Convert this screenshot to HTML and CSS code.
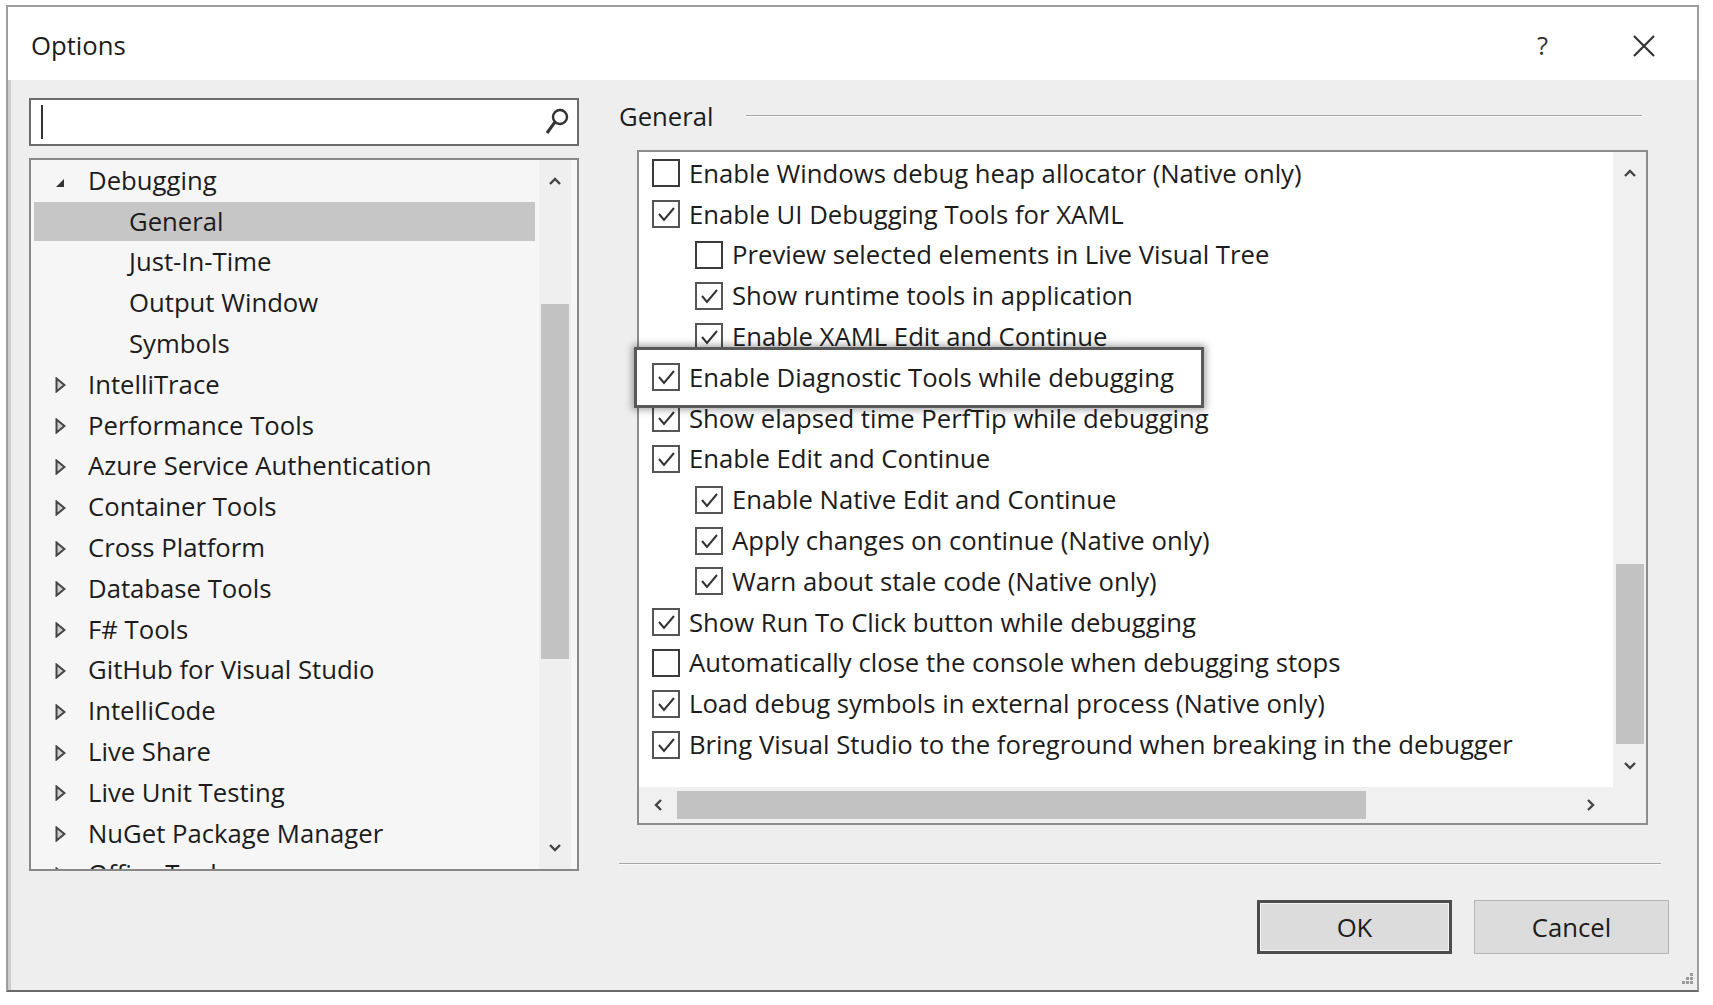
FILE: index.html
```html
<!DOCTYPE html>
<html>
<head>
<meta charset="utf-8">
<title>Options</title>
<link rel="stylesheet" href="styles.css">
</head>
<body>
<div class="window">
  <div class="titlebar">
    <span class="title">Options</span>
    <span class="help">?</span>
    <svg class="close" width="24" height="24" viewBox="0 0 24 24"><path d="M2 2 L22 22 M22 2 L2 22" stroke="#333" stroke-width="2.2" fill="none"/></svg>
  </div>
  <div class="content">
    <div class="left">
      <div class="search">
        <span class="caret"></span>
        <svg class="search-icon" width="26" height="32" viewBox="0 0 26 32"><circle cx="16" cy="11" r="7" stroke="#333" stroke-width="2.4" fill="none"/><path d="M11 16 L3 27" stroke="#333" stroke-width="3" fill="none"/></svg>
      </div>
      <div class="tree">
        <div class="tree-list">
          <div class="trow"><span class="exp"><svg width="10" height="10" viewBox="0 0 10 10"><polygon points="9,1 9,9 1,9" fill="#333"/></svg></span>Debugging</div>
          <div class="trow sub sel">General</div>
          <div class="trow sub">Just-In-Time</div>
          <div class="trow sub">Output Window</div>
          <div class="trow sub">Symbols</div>
          <div class="trow"><span class="exp"><svg class="tri" width="11" height="16" viewBox="0 0 11 16"><polygon points="1.5,1.5 9.5,8 1.5,14.5" stroke="#444" stroke-width="2" fill="#cfcfcf"/></svg></span>IntelliTrace</div>
          <div class="trow"><span class="exp"><svg class="tri" width="11" height="16" viewBox="0 0 11 16"><polygon points="1.5,1.5 9.5,8 1.5,14.5" stroke="#444" stroke-width="2" fill="#cfcfcf"/></svg></span>Performance Tools</div>
          <div class="trow"><span class="exp"><svg class="tri" width="11" height="16" viewBox="0 0 11 16"><polygon points="1.5,1.5 9.5,8 1.5,14.5" stroke="#444" stroke-width="2" fill="#cfcfcf"/></svg></span>Azure Service Authentication</div>
          <div class="trow"><span class="exp"><svg class="tri" width="11" height="16" viewBox="0 0 11 16"><polygon points="1.5,1.5 9.5,8 1.5,14.5" stroke="#444" stroke-width="2" fill="#cfcfcf"/></svg></span>Container Tools</div>
          <div class="trow"><span class="exp"><svg class="tri" width="11" height="16" viewBox="0 0 11 16"><polygon points="1.5,1.5 9.5,8 1.5,14.5" stroke="#444" stroke-width="2" fill="#cfcfcf"/></svg></span>Cross Platform</div>
          <div class="trow"><span class="exp"><svg class="tri" width="11" height="16" viewBox="0 0 11 16"><polygon points="1.5,1.5 9.5,8 1.5,14.5" stroke="#444" stroke-width="2" fill="#cfcfcf"/></svg></span>Database Tools</div>
          <div class="trow"><span class="exp"><svg class="tri" width="11" height="16" viewBox="0 0 11 16"><polygon points="1.5,1.5 9.5,8 1.5,14.5" stroke="#444" stroke-width="2" fill="#cfcfcf"/></svg></span>F# Tools</div>
          <div class="trow"><span class="exp"><svg class="tri" width="11" height="16" viewBox="0 0 11 16"><polygon points="1.5,1.5 9.5,8 1.5,14.5" stroke="#444" stroke-width="2" fill="#cfcfcf"/></svg></span>GitHub for Visual Studio</div>
          <div class="trow"><span class="exp"><svg class="tri" width="11" height="16" viewBox="0 0 11 16"><polygon points="1.5,1.5 9.5,8 1.5,14.5" stroke="#444" stroke-width="2" fill="#cfcfcf"/></svg></span>IntelliCode</div>
          <div class="trow"><span class="exp"><svg class="tri" width="11" height="16" viewBox="0 0 11 16"><polygon points="1.5,1.5 9.5,8 1.5,14.5" stroke="#444" stroke-width="2" fill="#cfcfcf"/></svg></span>Live Share</div>
          <div class="trow"><span class="exp"><svg class="tri" width="11" height="16" viewBox="0 0 11 16"><polygon points="1.5,1.5 9.5,8 1.5,14.5" stroke="#444" stroke-width="2" fill="#cfcfcf"/></svg></span>Live Unit Testing</div>
          <div class="trow"><span class="exp"><svg class="tri" width="11" height="16" viewBox="0 0 11 16"><polygon points="1.5,1.5 9.5,8 1.5,14.5" stroke="#444" stroke-width="2" fill="#cfcfcf"/></svg></span>NuGet Package Manager</div>
          <div class="trow"><span class="exp"><svg class="tri" width="11" height="16" viewBox="0 0 11 16"><polygon points="1.5,1.5 9.5,8 1.5,14.5" stroke="#444" stroke-width="2" fill="#cfcfcf"/></svg></span>Office Tools</div>
        </div>
        <div class="tscroll">
          <div class="arrow up"><svg width="14" height="10" viewBox="0 0 14 10"><polyline points="2,8 7,3 12,8" stroke="#444" stroke-width="2.4" fill="none"/></svg></div>
          <div class="tspace"></div>
          <div class="tthumb"></div>
          <div class="fill"></div>
          <div class="arrow down"><svg width="14" height="10" viewBox="0 0 14 10"><polyline points="2,2 7,7 12,2" stroke="#444" stroke-width="2.4" fill="none"/></svg></div>
        </div>
      </div>
    </div>
    <div class="right">
      <div class="group-head"><span>General</span><span class="rule"></span></div>
      <div class="optbox">
        <div class="optlist">
          <div class="orow"><span class="cb"></span>Enable Windows debug heap allocator (Native only)</div>
          <div class="orow"><span class="cb on"><svg width="24" height="24" viewBox="0 0 24 24"><polyline points="5,12 10,18 20,6" stroke="#333" stroke-width="2" fill="none"/></svg></span>Enable UI Debugging Tools for XAML</div>
          <div class="orow l2"><span class="cb"></span>Preview selected elements in Live Visual Tree</div>
          <div class="orow l2"><span class="cb on"><svg width="24" height="24" viewBox="0 0 24 24"><polyline points="5,12 10,18 20,6" stroke="#333" stroke-width="2" fill="none"/></svg></span>Show runtime tools in application</div>
          <div class="orow l2"><span class="cb on"><svg width="24" height="24" viewBox="0 0 24 24"><polyline points="5,12 10,18 20,6" stroke="#333" stroke-width="2" fill="none"/></svg></span>Enable XAML Edit and Continue</div>
          <div class="orow hl"><span class="cb on"><svg width="24" height="24" viewBox="0 0 24 24"><polyline points="5,12 10,18 20,6" stroke="#333" stroke-width="2" fill="none"/></svg></span>Enable Diagnostic Tools while debugging</div>
          <div class="orow"><span class="cb on"><svg width="24" height="24" viewBox="0 0 24 24"><polyline points="5,12 10,18 20,6" stroke="#333" stroke-width="2" fill="none"/></svg></span>Show elapsed time PerfTip while debugging</div>
          <div class="orow"><span class="cb on"><svg width="24" height="24" viewBox="0 0 24 24"><polyline points="5,12 10,18 20,6" stroke="#333" stroke-width="2" fill="none"/></svg></span>Enable Edit and Continue</div>
          <div class="orow l2"><span class="cb on"><svg width="24" height="24" viewBox="0 0 24 24"><polyline points="5,12 10,18 20,6" stroke="#333" stroke-width="2" fill="none"/></svg></span>Enable Native Edit and Continue</div>
          <div class="orow l2"><span class="cb on"><svg width="24" height="24" viewBox="0 0 24 24"><polyline points="5,12 10,18 20,6" stroke="#333" stroke-width="2" fill="none"/></svg></span>Apply changes on continue (Native only)</div>
          <div class="orow l2"><span class="cb on"><svg width="24" height="24" viewBox="0 0 24 24"><polyline points="5,12 10,18 20,6" stroke="#333" stroke-width="2" fill="none"/></svg></span>Warn about stale code (Native only)</div>
          <div class="orow"><span class="cb on"><svg width="24" height="24" viewBox="0 0 24 24"><polyline points="5,12 10,18 20,6" stroke="#333" stroke-width="2" fill="none"/></svg></span>Show Run To Click button while debugging</div>
          <div class="orow"><span class="cb"></span>Automatically close the console when debugging stops</div>
          <div class="orow"><span class="cb on"><svg width="24" height="24" viewBox="0 0 24 24"><polyline points="5,12 10,18 20,6" stroke="#333" stroke-width="2" fill="none"/></svg></span>Load debug symbols in external process (Native only)</div>
          <div class="orow"><span class="cb on"><svg width="24" height="24" viewBox="0 0 24 24"><polyline points="5,12 10,18 20,6" stroke="#333" stroke-width="2" fill="none"/></svg></span>Bring Visual Studio to the foreground when breaking in the debugger</div>
        </div>
        <div class="vscroll">
          <div class="arrow vup"><svg width="14" height="10" viewBox="0 0 14 10"><polyline points="2,8 7,3 12,8" stroke="#444" stroke-width="2.4" fill="none"/></svg></div>
          <div class="vspace"></div>
          <div class="vthumb"></div>
          <div class="arrow vdown"><svg width="14" height="10" viewBox="0 0 14 10"><polyline points="2,2 7,7 12,2" stroke="#444" stroke-width="2.4" fill="none"/></svg></div>
        </div>
        <div class="hscroll">
          <div class="arrow hleft"><svg width="10" height="14" viewBox="0 0 10 14"><polyline points="8,2 3,7 8,12" stroke="#444" stroke-width="2.4" fill="none"/></svg></div>
          <div class="hthumb"></div>
          <div class="fill"></div>
          <div class="arrow hright"><svg width="10" height="14" viewBox="0 0 10 14"><polyline points="2,2 7,7 2,12" stroke="#444" stroke-width="2.4" fill="none"/></svg></div>
        </div>
        <div class="corner"></div>
      </div>
      <div class="sep"></div>
      <div class="buttons">
        <button class="btn default">OK</button>
        <button class="btn">Cancel</button>
      </div>
    </div>
  </div>
  <svg class="grip" width="16" height="16" viewBox="0 0 16 16">
    <rect x="12" y="2" width="3" height="3" fill="#9a9a9a"/>
    <rect x="8" y="6" width="3" height="3" fill="#9a9a9a"/>
    <rect x="12" y="6" width="3" height="3" fill="#9a9a9a"/>
    <rect x="4" y="10" width="3" height="3" fill="#9a9a9a"/>
    <rect x="8" y="10" width="3" height="3" fill="#9a9a9a"/>
    <rect x="12" y="10" width="3" height="3" fill="#9a9a9a"/>
  </svg>
</div>
</body>
</html>
```

FILE: styles.css
```css
* { box-sizing: border-box; }
html, body { margin: 0; padding: 0; background: #fff; }
body {
  font-family: "Open Sans", "Noto Sans", "DejaVu Sans", sans-serif;
  font-size: 25.7px;
  color: #1c1c1c;
}
.window {
  position: relative;
  margin: 5px 0 0 6px;
  width: 1693px;
  height: 987px;
  border: 2px solid #9e9e9e;
  border-bottom-color: #6a6a6a;
  background: #eeeeee;
  box-shadow: inset 3px 0 0 #cdcdcd;
  display: flex;
  flex-direction: column;
}
.titlebar {
  height: 73px;
  background: #fff;
  display: flex;
  align-items: center;
  padding: 4px 41px 0 23px;
}
.title { flex: 1; }
.help { margin-right: 84px; color: #333; }
.close { display: block; }

.content {
  flex: 1;
  display: flex;
  padding: 18px 28px 0 21px;
}
.left {
  width: 550px;
  display: flex;
  flex-direction: column;
  gap: 12px;
}
.search {
  height: 48px;
  border: 2px solid #6c6c6c;
  background: #fff;
  display: flex;
  align-items: center;
  padding: 0 7px 0 10px;
}
.caret { width: 2px; height: 34px; background: #333; }
.search-icon { margin-left: auto; display: block; }

.tree {
  height: 713px;
  border: 2px solid #888;
  background: #f6f6f6;
  display: flex;
}
.tree-list { flex: 1; overflow: hidden; }
.trow {
  height: 40.8px;
  margin: 0 4px 0 3px;
  display: flex;
  align-items: center;
  padding-left: 21px;
  white-space: nowrap;
}
.exp {
  width: 33px;
  display: flex;
  align-items: center;
}
.exp svg { display: block; margin-top: 6px; }
.exp svg.tri { margin-top: 2px; }
.trow.sub { padding-left: 95px; }
.trow.sel {
  background: #c6c6c6;
  height: 38.8px;
  margin: 1px 4px 1px 3px;
}
.tscroll {
  width: 32px;
  margin-right: 6px;
  background: #efefef;
  display: flex;
  flex-direction: column;
  align-items: center;
}
.arrow { display: flex; align-items: center; justify-content: center; }
.arrow svg { display: block; }
.tscroll .up { height: 42px; width: 100%; }
.tspace { height: 102px; }
.tthumb { height: 355px; width: 28px; background: #c2c2c2; }
.fill { flex: 1; }
.tscroll .down { height: 42px; width: 100%; }

.right {
  flex: 1;
  margin-left: 40px;
  display: flex;
  flex-direction: column;
}
.group-head {
  height: 36px;
  display: flex;
  align-items: center;
}
.rule {
  flex: 1;
  margin: 0 27px 0 32px;
  border-top: 1px solid #a6a6a6;
  border-bottom: 1px solid #fafafa;
}
.optbox {
  margin: 16px 21px 0 18px;
  height: 675px;
  border: 2px solid #8c8c8c;
  background: #fff;
  display: grid;
  grid-template-columns: 1fr 33px;
  grid-template-rows: 1fr 36px;
}
.optlist { grid-column: 1; grid-row: 1; padding-top: 1px; }
.orow {
  height: 40.8px;
  display: flex;
  align-items: center;
  padding-left: 13px;
  white-space: nowrap;
}
.orow.l2 { padding-left: 56px; }
.cb {
  width: 28px;
  height: 28px;
  flex-shrink: 0;
  border: 2px solid #3a3a3a;
  background: #fff;
  margin-right: 9px;
  display: flex;
  align-items: center;
  justify-content: center;
}
.cb.on { border-color: #555; }
.cb svg { display: block; }
.orow.hl { position: relative; z-index: 1; }
.orow.hl::before {
  content: "";
  position: absolute;
  left: -5px;
  top: -10px;
  bottom: -10px;
  width: 564px;
  border: 3px solid #595959;
  background: #fff;
  box-shadow: 0 0 7px 2px rgba(0, 0, 0, 0.35);
  z-index: -1;
}
.vscroll {
  grid-column: 2;
  grid-row: 1;
  background: #f0f0f0;
  display: flex;
  flex-direction: column;
  align-items: center;
}
.vup { height: 42px; width: 100%; }
.vspace { height: 370px; }
.vthumb { height: 180px; width: 28px; background: #c2c2c2; }
.vdown { flex: 1; width: 100%; }
.hscroll {
  grid-column: 1;
  grid-row: 2;
  background: #f0f0f0;
  display: flex;
  align-items: center;
}
.hleft { width: 38px; height: 100%; }
.hthumb { width: 689px; height: 28px; background: #c2c2c2; }
.hright { width: 45px; height: 100%; }
.corner { grid-column: 2; grid-row: 2; background: #f0f0f0; }

.sep {
  margin: 38px 8px 0 0;
  border-top: 1px solid #a6a6a6;
  border-bottom: 1px solid #fafafa;
}
.buttons {
  margin-top: 35px;
  display: flex;
  justify-content: flex-end;
  gap: 22px;
}
.btn {
  width: 195px;
  height: 54px;
  font-family: inherit;
  font-size: 25.7px;
  color: #1c1c1c;
  background: #dcdcdc;
  border: 1px solid #b4b4b4;
  padding: 0;
}
.btn.default {
  border: 3px solid #4c4c4c;
  box-shadow: inset 0 0 0 1px #f2f2f2;
}
.grip {
  position: absolute;
  right: 3px;
  bottom: 3px;
}
```
